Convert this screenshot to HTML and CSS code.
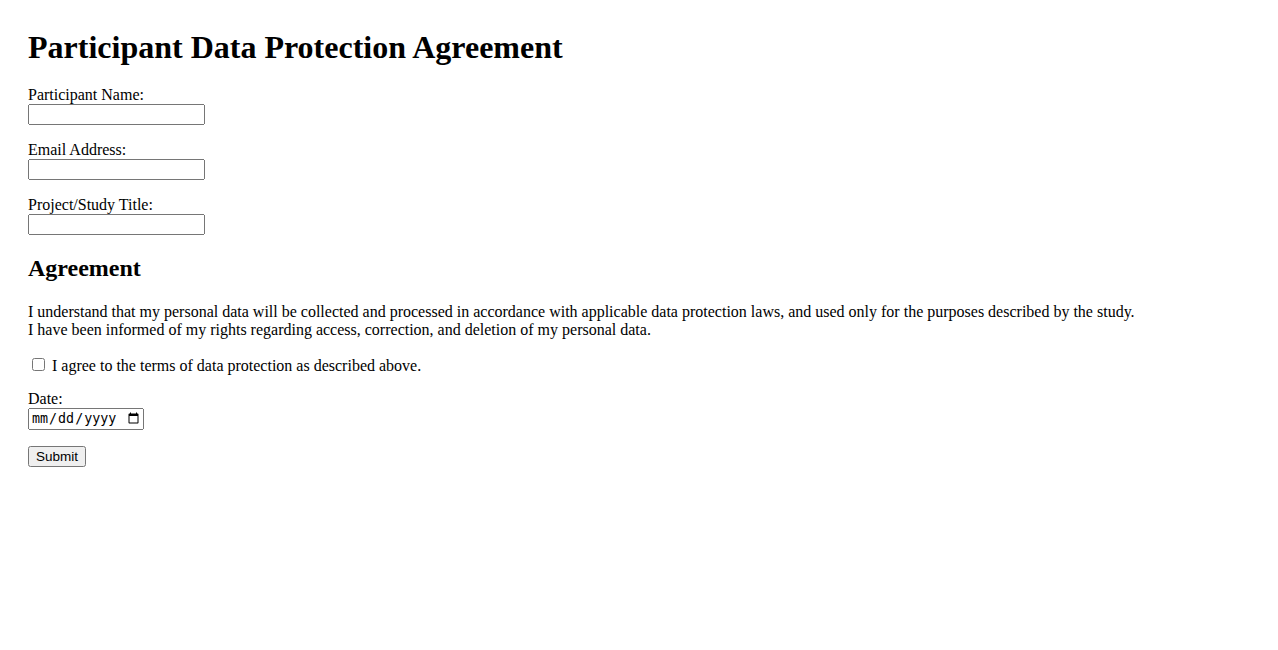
FILE: index.html
```html
<!DOCTYPE html>
<html lang="en">
<head>
<meta charset="utf-8">
<title>Participant Data Protection Agreement</title>
<link rel="stylesheet" href="styles.css">
</head>
<body>
<h1 class="title">Participant Data Protection Agreement</h1>
<form class="form">
  <div class="group">
    <label class="label" for="name">Participant Name:</label>
    <input class="text-input" type="text" id="name">
  </div>
  <div class="group">
    <label class="label" for="email">Email Address:</label>
    <input class="text-input" type="email" id="email">
  </div>
  <div class="group">
    <label class="label" for="project">Project/Study Title:</label>
    <input class="text-input" type="text" id="project">
  </div>
  <h2 class="section-title">Agreement</h2>
  <p class="text">I understand that my personal data will be collected and processed in accordance with applicable data protection laws, and used only for the purposes described by the study.<br>I have been informed of my rights regarding access, correction, and deletion of my personal data.</p>
  <div class="check-row">
    <label class="check-label"><input class="checkbox" type="checkbox"> I agree to the terms of data protection as described above.</label>
  </div>
  <div class="group">
    <label class="label" for="date">Date:</label>
    <input class="date-input" type="date" id="date">
  </div>
  <div class="group">
    <button class="submit" type="submit">Submit</button>
  </div>
</form>
</body>
</html>
```
FILE: styles.css
```css
body {
  margin: 29px 28px 28px;
  font-family: "Liberation Serif", "Times New Roman", serif;
  font-size: 16px;
  color: #000;
  background: #fff;
}
.title {
  font-size: 32px;
  font-weight: bold;
  margin: 0 0 20px;
}
.form {
  margin: 0;
}
.group {
  margin-bottom: 16px;
}
.check-row {
  margin-bottom: 15px;
}
.label {
  display: block;
}
.text-input {
  display: block;
  width: 177px;
  height: 21px;
  box-sizing: border-box;
  margin: 0;
}
.section-title {
  font-size: 24px;
  margin: 20px 0 21px;
}
.text {
  margin: 0 0 16px;
}
.check-label {
  display: block;
}
.checkbox {
  margin: 3px 3px 3px 4px;
}
.date-input {
  display: block;
  margin: 0;
  width: 116px;
  height: 22px;
  box-sizing: border-box;
}
.submit {
  margin: 0;
  width: 58px;
  height: 21px;
  box-sizing: border-box;
  padding: 0;
  font-family: "Liberation Sans", Arial, sans-serif;
  font-size: 13.5px;
}
```
